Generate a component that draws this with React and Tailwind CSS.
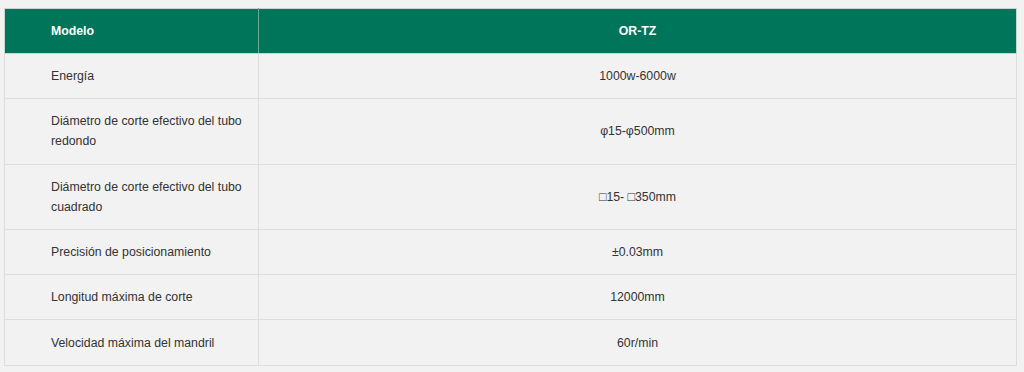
const rows = [
  ['Energía', '1000w-6000w'],
  ['Diámetro de corte efectivo del tubo redondo', 'φ15-φ500mm'],
  ['Diámetro de corte efectivo del tubo cuadrado', '□15- □350mm'],
  ['Precisión de posicionamiento', '±0.03mm'],
  ['Longitud máxima de corte', '12000mm'],
  ['Velocidad máxima del mandril', '60r/min'],
];

export default function App() {
  return (
    <div className="min-h-[372px] bg-[#f2f2f2] pt-2 pl-[4px] pr-[7px] font-['Liberation_Sans',Arial,sans-serif] text-[12.3px] leading-5 text-[#333]">
      <table className="w-full border-collapse border border-[#dcdcdc]">
        <thead>
          <tr className="bg-[#00755a] text-white">
            <th className="w-[254px] border border-[#c8d6d0] border-r-[#6ea896] py-3 pl-[46px] pr-3 text-left font-bold">
              Modelo
            </th>
            <th className="border border-[#c8d6d0] py-3 text-center font-bold">OR-TZ</th>
          </tr>
        </thead>
        <tbody>
          {rows.map(([label, value]) => (
            <tr key={label} className="bg-[#f2f2f2]">
              <td className="border border-[#dedede] py-[12.15px] pl-[46px] pr-3 text-left">{label}</td>
              <td className="border border-[#dedede] py-[12.15px] text-center">{value}</td>
            </tr>
          ))}
        </tbody>
      </table>
    </div>
  );
}
